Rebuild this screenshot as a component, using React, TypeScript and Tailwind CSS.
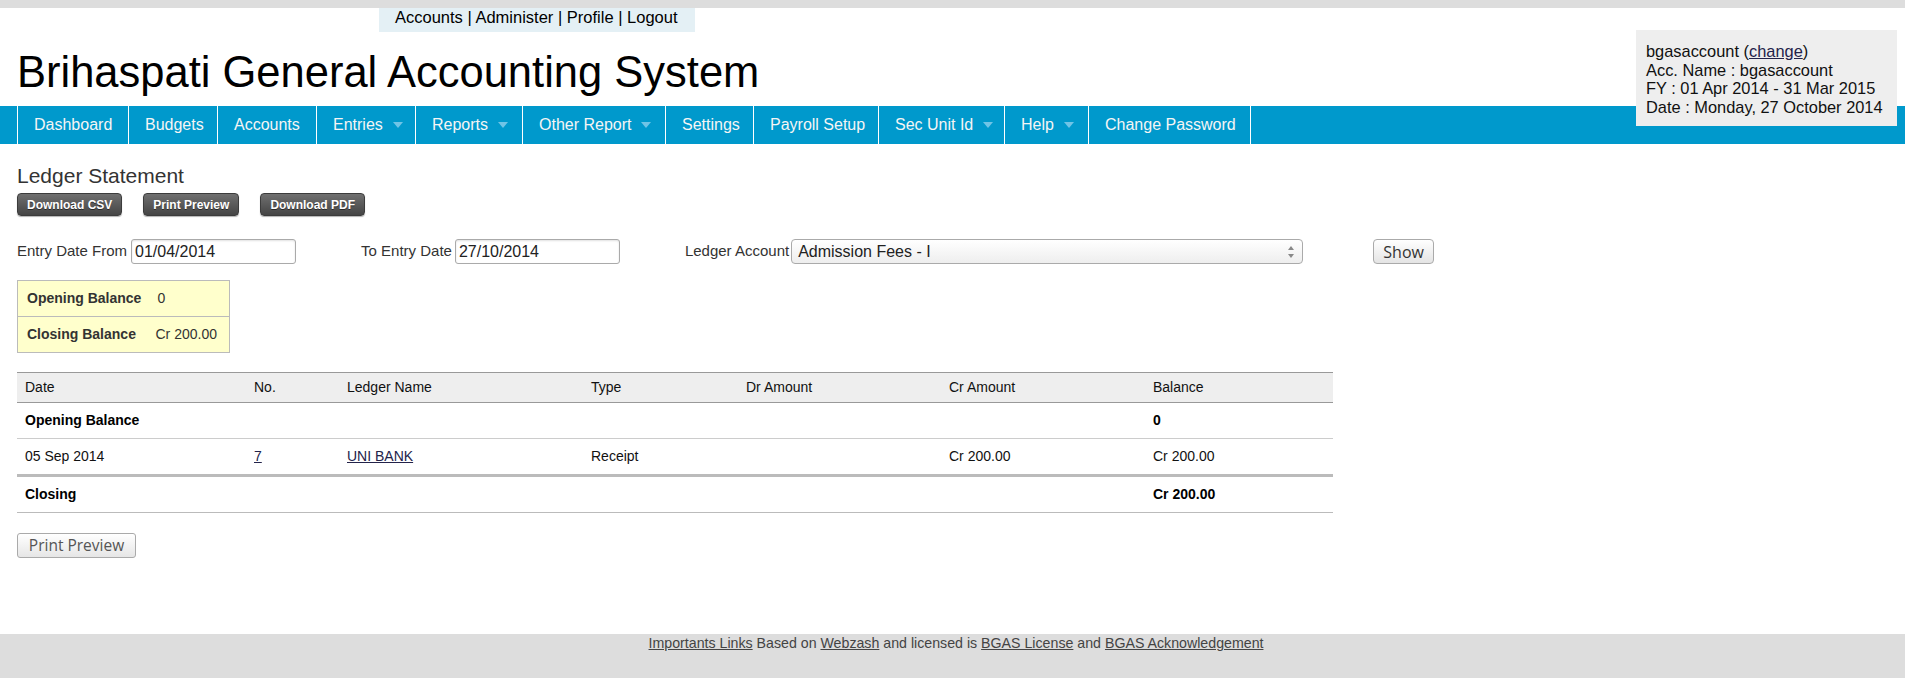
import React from "react";

const sans = { fontFamily: '"Liberation Sans", Arial, sans-serif' };

const navItems = [
    { label: "Dashboard", w: "w-[111px]" },
    { label: "Budgets", w: "w-[89px]" },
    { label: "Accounts", w: "w-[99px]" },
    { label: "Entries", w: "w-[99px]", menu: true },
    { label: "Reports", w: "w-[107px]", menu: true },
    { label: "Other Report", w: "w-[143px]", menu: true },
    { label: "Settings", w: "w-[88px]" },
    { label: "Payroll Setup", w: "w-[125px]" },
    { label: "Sec Unit Id", w: "w-[126px]", menu: true },
    { label: "Help", w: "w-[84px]", menu: true },
    { label: "Change Password", w: "w-[163px]" },
];

const Caret = () => (
    <svg width="10" height="6" viewBox="0 0 10 6" className="ml-[10px]">
        <polygon points="0,0 10,0 5,6" fill="#70c4e6" />
    </svg>
);

const DarkButton = ({ children }: { children: React.ReactNode }) => (
    <button className="h-[23px] px-[9px] rounded-[4px] border border-[#3c3c3c] bg-linear-to-b from-[#707070] to-[#454545] text-white text-[12px] font-bold leading-none shadow-[0_1px_1px_rgba(0,0,0,0.3)] [text-shadow:0_1px_0_rgba(0,0,0,0.5)]">
        {children}
    </button>
);

const TextInput = ({ value }: { value: string }) => (
    <div className="h-[25px] w-[165px] rounded-[3px] border border-[#aaa] bg-white px-[3px] text-[16px] leading-[23px] text-[#222] shadow-[inset_0_1px_2px_rgba(0,0,0,0.12)]">
        {value}
    </div>
);

export default function App() {
    return (
        <div className="min-h-[678px] bg-white text-[#222]" style={sans}>
            <div className="h-2 bg-[#dddddd]" />

            {/* header */}
            <div className="relative">
                <div className="ml-[379px] h-6 w-[316px] bg-[#e4f0f5] pl-4 text-[16.5px] leading-[18px] text-black">
                    Accounts | Administer | Profile | Logout
                </div>
                <div className="h-[74px] pl-[17px] pt-[16px] text-[43.5px] leading-[48px] text-black">
                    Brihaspati General Accounting System
                </div>
                <nav className="flex h-[38px] bg-[#0099cc] pl-[17px] text-[16px] text-[#f5f5f5]">
                    {navItems.map((item, i) => (
                        <div
                            key={item.label}
                            className={`flex h-full shrink-0 items-center border-l border-white pl-4 ${item.w} ${i === navItems.length - 1 ? "border-r" : ""}`}
                        >
                            <span>{item.label}</span>
                            {item.menu && <Caret />}
                        </div>
                    ))}
                </nav>

                <div className="absolute right-2 top-[22px] w-[261px] bg-[#eeeeee] pb-[10px] pl-[10px] pt-3 text-[16.4px] leading-[18.5px] text-[#111]">
                    <div>
                        bgasaccount (<a className="text-[#23234a] underline">change</a>)
                    </div>
                    <div>Acc. Name : bgasaccount</div>
                    <div>FY : 01 Apr 2014 - 31 Mar 2015</div>
                    <div>Date : Monday, 27 October 2014</div>
                </div>
            </div>

            {/* content */}
            <div className="px-[17px]">
                <h2 className="mt-5 text-[21px] leading-[24px] text-[#333]">Ledger Statement</h2>

                <div className="mt-[5px] flex gap-[21px]">
                    <DarkButton>Download CSV</DarkButton>
                    <DarkButton>Print Preview</DarkButton>
                    <DarkButton>Download PDF</DarkButton>
                </div>

                <div className="mt-[23px] flex items-center text-[15px] text-[#333]">
                    <span>Entry Date From</span>
                    <div className="ml-[4px]">
                        <TextInput value="01/04/2014" />
                    </div>
                    <span className="ml-[65px]">To Entry Date</span>
                    <div className="ml-[3px]">
                        <TextInput value="27/10/2014" />
                    </div>
                    <span className="ml-[65px]">Ledger Account</span>
                    <div className="ml-[2px] flex h-[25px] w-[512px] items-center justify-between rounded-[4px] border border-[#aaa] bg-linear-to-b from-white to-[#eeeeee] pl-[6px] pr-[8px] text-[16px] text-[#222]">
                        <span>Admission Fees - I</span>
                        <svg width="6" height="12" viewBox="0 0 6 12">
                            <polygon points="0,4 6,4 3,0" fill="#888" />
                            <polygon points="0,8 6,8 3,12" fill="#888" />
                        </svg>
                    </div>
                    <button
                        className="ml-[70px] h-[25px] w-[61px] rounded-[4px] border border-[#aaa] bg-linear-to-b from-white to-[#e4e4e4] text-[16px] leading-none text-[#333]"
                        style={{ fontFamily: '"Open Sans", sans-serif' }}
                    >
                        Show
                    </button>
                </div>

                <table className="mt-[16px] w-[213px] border-collapse border border-[#bbb] bg-[#ffffcc] text-[14px] text-[#333]">
                    <tbody>
                        <tr className="h-[36px] border-b border-[#bbb]">
                            <td className="w-[138px] pl-[9px] font-bold">Opening Balance</td>
                            <td className="pl-[2px]">0</td>
                        </tr>
                        <tr className="h-[36px]">
                            <td className="pl-[9px] font-bold">Closing Balance</td>
                            <td className="pl-0">Cr 200.00</td>
                        </tr>
                    </tbody>
                </table>

                <table className="mt-[19px] w-[1316px] table-fixed border-collapse text-left text-[14px] text-[#111]">
                    <colgroup>
                        <col className="w-[229px]" />
                        <col className="w-[93px]" />
                        <col className="w-[244px]" />
                        <col className="w-[155px]" />
                        <col className="w-[203px]" />
                        <col className="w-[204px]" />
                        <col className="w-[188px]" />
                    </colgroup>
                    <thead>
                        <tr className="h-[30px] border-y border-[#999] bg-[#eeeeee]">
                            {["Date", "No.", "Ledger Name", "Type", "Dr Amount", "Cr Amount", "Balance"].map((h) => (
                                <th key={h} className="px-2 font-normal">
                                    {h}
                                </th>
                            ))}
                        </tr>
                    </thead>
                    <tbody>
                        <tr className="h-[36px] border-b border-[#ccc] font-bold text-black">
                            <td className="px-2">Opening Balance</td>
                            <td />
                            <td />
                            <td />
                            <td />
                            <td />
                            <td className="px-2">0</td>
                        </tr>
                        <tr className="h-[37px] border-b-[3px] border-[#bbb]">
                            <td className="px-2">05 Sep 2014</td>
                            <td className="px-2">
                                <a className="text-[#23234a] underline">7</a>
                            </td>
                            <td className="px-2">
                                <a className="text-[#23234a] underline">UNI BANK</a>
                            </td>
                            <td className="px-2">Receipt</td>
                            <td />
                            <td className="px-2">Cr 200.00</td>
                            <td className="px-2">Cr 200.00</td>
                        </tr>
                        <tr className="h-[37px] border-b border-[#bbb] font-bold text-black">
                            <td className="px-2">Closing</td>
                            <td />
                            <td />
                            <td />
                            <td />
                            <td />
                            <td className="px-2">Cr 200.00</td>
                        </tr>
                    </tbody>
                </table>

                <button
                    className="mt-[20px] h-[25px] w-[119px] rounded-[3px] border border-[#aaa] bg-linear-to-b from-white to-[#e6e6e6] text-[15.5px] leading-none text-[#555]"
                    style={{ fontFamily: '"Open Sans", sans-serif' }}
                >
                    Print Preview
                </button>
            </div>

            <footer className="mt-[76px] h-[44px] bg-[#dddddd] pl-[7px] text-center text-[14.2px] leading-[18px] text-[#444]">
                <a className="underline">Importants Links</a> Based on <a className="underline">Webzash</a> and licensed is{" "}
                <a className="underline">BGAS License</a> and <a className="underline">BGAS Acknowledgement</a>
            </footer>
        </div>
    );
}
